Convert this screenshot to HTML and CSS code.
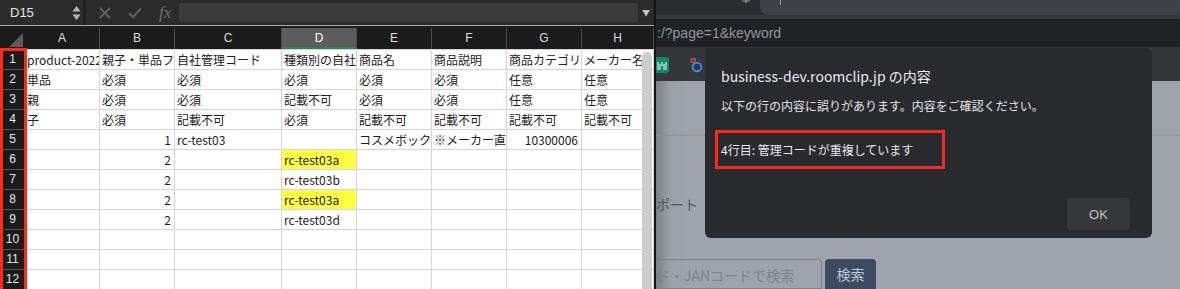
FILE: index.html
```html
<!DOCTYPE html>
<html lang="ja">

<head>
    <meta charset="UTF-8">
    <title>Import error</title>
    <link rel="stylesheet" href="styles.css">
</head>

<body>
    <div class="screen">
        <section class="sheet">
            <div class="formula-bar">
                <div class="name-box">
                    <span class="cell-ref">D15</span>
                    <svg class="stepper" width="9" height="16" viewBox="0 0 9 16">
                        <path d="M4.5 1 L8.5 6.5 L0.5 6.5 Z" fill="#b5b5b5"/>
                        <path d="M4.5 15 L8.5 9.5 L0.5 9.5 Z" fill="#b5b5b5"/>
                    </svg>
                </div>
                <div class="fx-tools">
                    <svg width="12" height="12" viewBox="0 0 12 12">
                        <path d="M1 1 L11 11 M11 1 L1 11" stroke="#5e5e5e" stroke-width="2"/>
                    </svg>
                    <svg width="14" height="12" viewBox="0 0 14 12">
                        <path d="M1 6 L5 10 L13 1.5" stroke="#5e5e5e" stroke-width="2" fill="none"/>
                    </svg>
                    <span class="fx">fx</span>
                </div>
                <div class="formula-input"></div>
                <span class="formula-drop">▼</span>
            </div>

            <div class="grid">
                <div class="corner"><span class="corner-tri"></span></div>
                <div class="col-head">A</div>
                <div class="col-head">B</div>
                <div class="col-head">C</div>
                <div class="col-head active">D</div>
                <div class="col-head">E</div>
                <div class="col-head">F</div>
                <div class="col-head">G</div>
                <div class="col-head">H</div>

                <div class="row-head">1</div>
                <div class="cell">product-2022</div>
                <div class="cell">親子・単品フ</div>
                <div class="cell">自社管理コード</div>
                <div class="cell">種類別の自社</div>
                <div class="cell">商品名</div>
                <div class="cell">商品説明</div>
                <div class="cell">商品カテゴリ</div>
                <div class="cell">メーカー名</div>

                <div class="row-head">2</div>
                <div class="cell">単品</div>
                <div class="cell">必須</div>
                <div class="cell">必須</div>
                <div class="cell">必須</div>
                <div class="cell">必須</div>
                <div class="cell">必須</div>
                <div class="cell">任意</div>
                <div class="cell">任意</div>

                <div class="row-head">3</div>
                <div class="cell">親</div>
                <div class="cell">必須</div>
                <div class="cell">必須</div>
                <div class="cell">記載不可</div>
                <div class="cell">必須</div>
                <div class="cell">必須</div>
                <div class="cell">任意</div>
                <div class="cell">任意</div>

                <div class="row-head">4</div>
                <div class="cell">子</div>
                <div class="cell">必須</div>
                <div class="cell">記載不可</div>
                <div class="cell">必須</div>
                <div class="cell">記載不可</div>
                <div class="cell">記載不可</div>
                <div class="cell">記載不可</div>
                <div class="cell">記載不可</div>

                <div class="row-head">5</div>
                <div class="cell"></div>
                <div class="cell num">1</div>
                <div class="cell">rc-test03</div>
                <div class="cell"></div>
                <div class="cell">コスメボック</div>
                <div class="cell">※メーカー直</div>
                <div class="cell num">10300006</div>
                <div class="cell"></div>

                <div class="row-head">6</div>
                <div class="cell"></div>
                <div class="cell num">2</div>
                <div class="cell"></div>
                <div class="cell dup">rc-test03a</div>
                <div class="cell"></div>
                <div class="cell"></div>
                <div class="cell"></div>
                <div class="cell"></div>

                <div class="row-head">7</div>
                <div class="cell"></div>
                <div class="cell num">2</div>
                <div class="cell"></div>
                <div class="cell">rc-test03b</div>
                <div class="cell"></div>
                <div class="cell"></div>
                <div class="cell"></div>
                <div class="cell"></div>

                <div class="row-head">8</div>
                <div class="cell"></div>
                <div class="cell num">2</div>
                <div class="cell"></div>
                <div class="cell dup">rc-test03a</div>
                <div class="cell"></div>
                <div class="cell"></div>
                <div class="cell"></div>
                <div class="cell"></div>

                <div class="row-head">9</div>
                <div class="cell"></div>
                <div class="cell num">2</div>
                <div class="cell"></div>
                <div class="cell">rc-test03d</div>
                <div class="cell"></div>
                <div class="cell"></div>
                <div class="cell"></div>
                <div class="cell"></div>

                <div class="row-head">10</div>
                <div class="cell"></div>
                <div class="cell"></div>
                <div class="cell"></div>
                <div class="cell"></div>
                <div class="cell"></div>
                <div class="cell"></div>
                <div class="cell"></div>
                <div class="cell"></div>

                <div class="row-head">11</div>
                <div class="cell"></div>
                <div class="cell"></div>
                <div class="cell"></div>
                <div class="cell"></div>
                <div class="cell"></div>
                <div class="cell"></div>
                <div class="cell"></div>
                <div class="cell"></div>

                <div class="row-head">12</div>
                <div class="cell"></div>
                <div class="cell"></div>
                <div class="cell"></div>
                <div class="cell"></div>
                <div class="cell"></div>
                <div class="cell"></div>
                <div class="cell"></div>
                <div class="cell"></div>
            </div>

            <div class="scrollbar"></div>
            <div class="row-mark"></div>
        </section>

        <section class="browser">
            <div class="tabstrip">
                <svg class="star" width="12" height="15" viewBox="0 0 12 15">
                    <path d="M2 -2 L4 3 L6 -2 M0 1 L8 1" stroke="#8a9096" stroke-width="1" fill="none"/>
                </svg>
                <div class="omnibox"><span class="caret"></span></div>
            </div>
            <div class="tab-gap"></div>
            <div class="urlbar">:/?page=1&amp;keyword</div>
            <div class="bookmarks">
                <svg class="bm-icon" width="14" height="16" viewBox="0 0 14 16">
                    <rect x="-3" y="0" width="16" height="16" rx="3" fill="#12876b"/>
                    <path d="M1 13 V5 H3 V7 H5 V5 H7 V7 H9 V5 H11 V13 Z" fill="#7fc7b2"/>
                    <rect x="5" y="9" width="2" height="4" fill="#12876b"/>
                </svg>
                <svg class="bm-icon" width="14" height="16" viewBox="0 0 14 16">
                    <circle cx="8" cy="10" r="4.3" stroke="#3b82f0" stroke-width="2" fill="none"/>
                    <circle cx="4" cy="3.5" r="2" stroke="#e2463a" stroke-width="1.3" fill="none"/>
                    <circle cx="6.2" cy="2.6" r="1" fill="#34a853"/>
                </svg>
            </div>
            <div class="page">
                <div class="page-head"></div>
                <div class="page-title">ポート</div>
                <div class="search">
                    <div class="search-input">ド・JANコードで検索</div>
                    <button class="search-btn">検索</button>
                </div>
            </div>

            <div class="dialog">
                <div class="dialog-title">business-dev.roomclip.jp の内容</div>
                <p class="dialog-msg">以下の行の内容に誤りがあります。内容をご確認ください。</p>
                <p class="dialog-error">4行目: 管理コードが重複しています</p>
                <div class="dialog-actions">
                    <button class="ok-btn">OK</button>
                </div>
            </div>
        </section>
    </div>
</body>

</html>
```

FILE: styles.css
```css
body {
    margin: 0;
    padding: 0;
    background-color: #202124;
    font-family: "Noto Sans CJK JP", "Liberation Sans", sans-serif;
}

.screen {
    display: flex;
    width: 1180px;
    height: 289px;
    overflow: hidden;
}

/* spreadsheet side */

.sheet {
    position: relative;
    width: 654px;
    border-right: 2px solid #141414;
    background-color: #1e1e1e;
    overflow: hidden;
}

.formula-bar {
    display: flex;
    align-items: center;
    height: 25px;
    background-color: #2b2b2b;
    border-bottom: 1px solid #a8a8a8;
    margin-bottom: 2px;
}

.name-box {
    display: flex;
    align-items: center;
    width: 86px;
    height: 25px;
    padding-left: 10px;
    box-sizing: border-box;
    border-right: 3px solid #222;
}

.cell-ref {
    font-family: "Liberation Sans", sans-serif;
    font-size: 13px;
    color: #e4e4e4;
    width: 62px;
}

.fx-tools {
    display: flex;
    align-items: center;
    gap: 17px;
    padding-left: 13px;
    width: 93px;
    box-sizing: border-box;
}

.fx {
    font-family: "Liberation Serif", serif;
    font-style: italic;
    font-size: 17px;
    color: #6e6e6e;
    line-height: 1;
}

.formula-input {
    width: 459px;
    height: 19px;
    background-color: #3a3a3a;
    border-radius: 2px;
}

.formula-drop {
    font-size: 8px;
    color: #c4c4c4;
    margin-left: 4px;
}

.grid {
    display: grid;
    grid-template-columns: 25px 75px 75px 107px 75px 75px 75px 75px 1fr;
    grid-template-rows: 21px;
    grid-auto-rows: 20px;
    background-color: #fff;
}

.corner, .col-head {
    background-color: #1b1b1b;
    color: #dedede;
    font-family: "Liberation Sans", sans-serif;
    font-size: 12px;
    text-align: center;
    line-height: 20px;
    border-right: 1px solid #4c4c4c;
    box-sizing: border-box;
}

.corner {
    position: relative;
    border-right: none;
}

.corner-tri {
    position: absolute;
    right: 2px;
    bottom: 2px;
    width: 0;
    height: 0;
    border-left: 14px solid transparent;
    border-bottom: 14px solid #5a5a5a;
}

.col-head.active {
    background-color: #5c5c5c;
    color: #fff;
    border-bottom: 2px solid #1f8a4c;
}

.row-head {
    background-color: #1b1b1b;
    color: #e6e6e6;
    font-family: "Liberation Sans", sans-serif;
    font-size: 12px;
    text-align: center;
    line-height: 19px;
    border-top: 1px solid #525252;
}

.cell {
    font-size: 12px;
    line-height: 19px;
    color: #222;
    padding: 0 2px;
    white-space: nowrap;
    overflow: hidden;
    border-top: 1px solid #d5d5d5;
    border-right: 1px solid #d5d5d5;
    box-sizing: border-box;
}

.cell.num {
    text-align: right;
    padding-right: 3px;
}

.cell.dup {
    background-color: #ffff3f;
}

.scrollbar {
    position: absolute;
    left: 642px;
    top: 52px;
    width: 10px;
    height: 240px;
    background-color: #cdcdcd;
    border-radius: 5px 5px 0 0;
}

.row-mark {
    position: absolute;
    left: 0;
    top: 48px;
    width: 27px;
    height: 250px;
    border: 3px solid #fb2a1c;
    box-sizing: border-box;
}

/* browser side */

.browser {
    position: relative;
    flex: 1;
    display: flex;
    flex-direction: column;
    background-color: #202124;
}

.tabstrip {
    display: flex;
    height: 15px;
    background-color: #2b2c2f;
}

.star {
    margin-left: 86px;
    margin-right: 6px;
}

.omnibox {
    flex: 1;
    background-color: #3d4044;
    border-bottom-left-radius: 8px;
}

.caret {
    display: block;
    width: 1px;
    height: 5px;
    margin-left: 20px;
    background-color: #9aa0a6;
}

.tab-gap {
    height: 4px;
    background-color: #35373a;
}

.urlbar {
    height: 28px;
    line-height: 28px;
    padding-left: 1px;
    font-family: "Liberation Sans", sans-serif;
    font-size: 14px;
    color: #8f959b;
}

.bookmarks {
    display: flex;
    align-items: center;
    gap: 19px;
    height: 36px;
    background-color: #35363a;
}

.bm-icon {
    margin-top: 3px;
}

.page {
    flex: 1;
    background-image: linear-gradient(to right, #7c818a 0, #9aa0aa 14px, #9ea4ae 30px);
}

.page-head {
    height: 54px;
    border-bottom: 1px solid #8c929b;
}

.page-title {
    margin-top: 58px;
    line-height: 20px;
    font-size: 14px;
    color: #4d5461;
}

.search {
    display: flex;
    margin-top: 45px;
    gap: 3px;
}

.search-input {
    width: 166px;
    height: 30px;
    line-height: 30px;
    border: 1px solid #7c838d;
    border-left: none;
    border-radius: 0 4px 0 0;
    box-sizing: border-box;
    font-size: 14px;
    color: #7c838e;
}

.search-btn {
    width: 51px;
    height: 30px;
    border: none;
    border-radius: 4px 4px 0 0;
    background-color: #3c4a5f;
    color: #c2c7cf;
    font-family: "Noto Sans CJK JP", sans-serif;
    font-size: 14px;
    padding: 0;
}

.dialog {
    position: absolute;
    left: 49px;
    top: 48px;
    width: 447px;
    height: 190px;
    padding: 20px 16px 0 16px;
    box-sizing: border-box;
    background-color: #292a2d;
    border-radius: 0 6px 6px 6px;
}

.dialog-title {
    font-size: 14px;
    line-height: 16px;
    color: #e8eaed;
}

.dialog-msg {
    margin: 14px 0 0 0;
    font-size: 12px;
    line-height: 16px;
    color: #e3e5e8;
}

.dialog-error {
    margin: 16px 0 0 -6px;
    width: 230px;
    height: 39px;
    padding-left: 3px;
    line-height: 33px;
    font-size: 12px;
    color: #e8eaed;
    border: 3px solid #fb2a1c;
    box-sizing: border-box;
}

.dialog-actions {
    display: flex;
    justify-content: flex-end;
    margin-top: 29px;
    padding-right: 6px;
}

.ok-btn {
    width: 63px;
    height: 32px;
    border: none;
    border-radius: 4px;
    background-color: #36373a;
    color: #bdc1c6;
    font-family: "Liberation Sans", sans-serif;
    font-size: 13px;
    padding: 0;
}
```
